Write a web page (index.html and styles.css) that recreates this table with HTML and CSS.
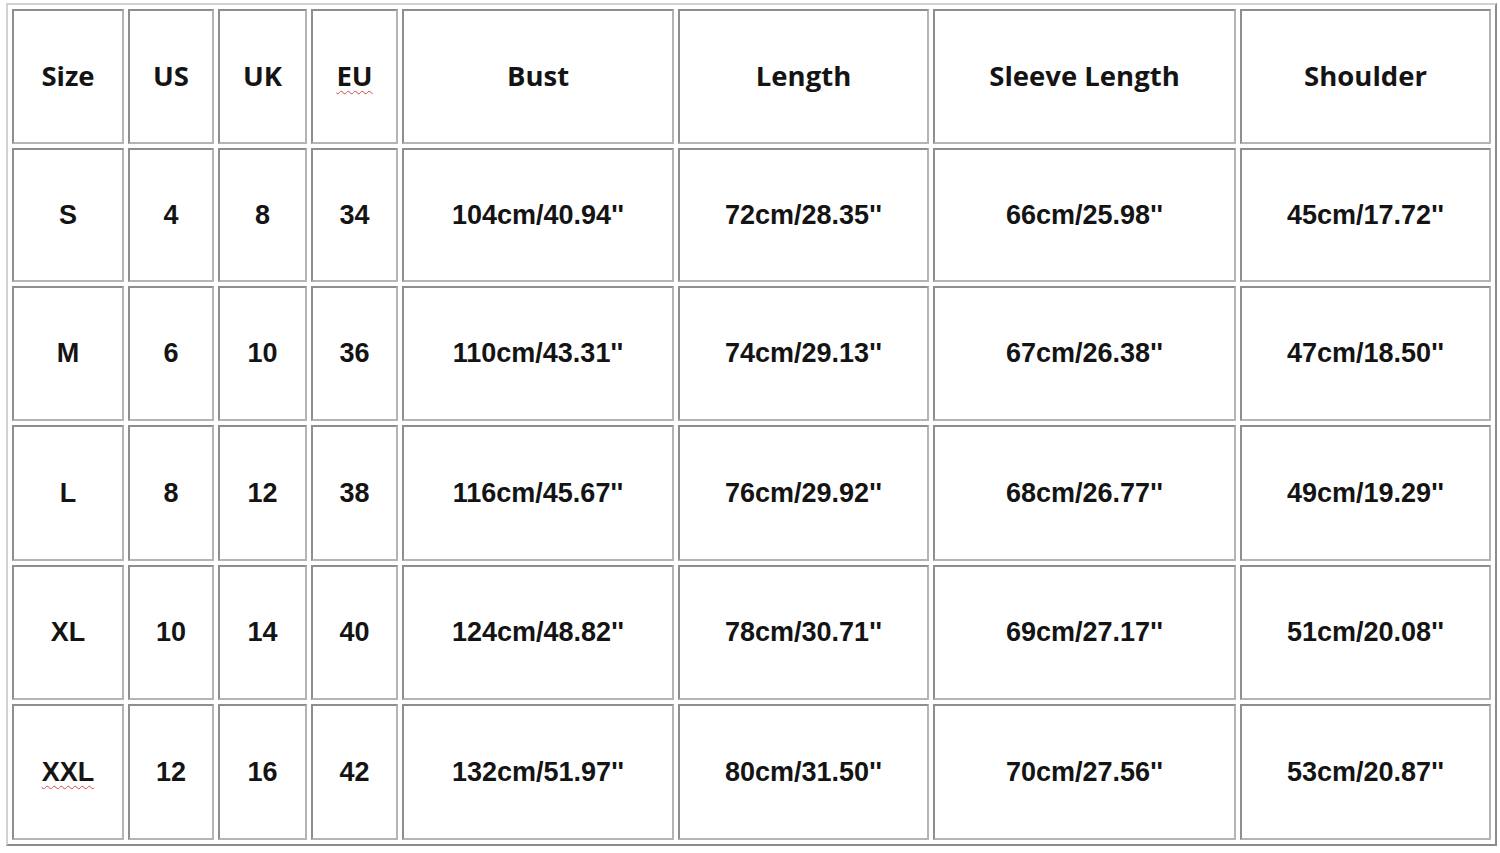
FILE: index.html
```html
<!DOCTYPE html>
<html>
<head>
<meta charset="utf-8">
<link rel="stylesheet" href="styles.css">
</head>
<body>
<div class="chart">
  <div class="cell head">Size</div><div class="cell head">US</div><div class="cell head">UK</div><div class="cell head"><span class="spell">EU</span></div><div class="cell head">Bust</div><div class="cell head">Length</div><div class="cell head">Sleeve Length</div><div class="cell head">Shoulder</div>
  <div class="cell">S</div><div class="cell">4</div><div class="cell">8</div><div class="cell">34</div><div class="cell">104cm/40.94''</div><div class="cell">72cm/28.35''</div><div class="cell">66cm/25.98''</div><div class="cell">45cm/17.72''</div>
  <div class="cell">M</div><div class="cell">6</div><div class="cell">10</div><div class="cell">36</div><div class="cell">110cm/43.31''</div><div class="cell">74cm/29.13''</div><div class="cell">67cm/26.38''</div><div class="cell">47cm/18.50''</div>
  <div class="cell">L</div><div class="cell">8</div><div class="cell">12</div><div class="cell">38</div><div class="cell">116cm/45.67''</div><div class="cell">76cm/29.92''</div><div class="cell">68cm/26.77''</div><div class="cell">49cm/19.29''</div>
  <div class="cell">XL</div><div class="cell">10</div><div class="cell">14</div><div class="cell">40</div><div class="cell">124cm/48.82''</div><div class="cell">78cm/30.71''</div><div class="cell">69cm/27.17''</div><div class="cell">51cm/20.08''</div>
  <div class="cell"><span class="spell">XXL</span></div><div class="cell">12</div><div class="cell">16</div><div class="cell">42</div><div class="cell">132cm/51.97''</div><div class="cell">80cm/31.50''</div><div class="cell">70cm/27.56''</div><div class="cell">53cm/20.87''</div>
</div>
</body>
</html>
```
FILE: styles.css
```css
html, body {
  margin: 0;
  padding: 0;
  background: #ffffff;
}
body {
  padding: 3px 0 0 6px;
  font-family: "Liberation Sans", Arial, sans-serif;
}
.chart {
  display: grid;
  grid-template-columns: 112px 86px 89px 87px 272px 251px 303px 251px;
  grid-template-rows: 135px 134px 135px 136px 135px 136px;
  gap: 4px;
  padding: 4px;
  width: max-content;
  border: 2px solid;
  border-color: #d2d2d2 #8c8c8c #8c8c8c #d2d2d2;
}
.cell {
  box-sizing: border-box;
  border: 2px solid;
  border-color: #8e8e8e #b4b4b4 #b4b4b4 #8e8e8e;
  display: flex;
  align-items: center;
  justify-content: center;
  font-weight: bold;
  font-size: 27px;
  color: #141414;
}
.head {
  font-family: "Open Sans", "DejaVu Sans", sans-serif;
  font-size: 27.5px;
  padding-bottom: 2px;
}
.spell {
  text-decoration: underline wavy #d04a4a;
  text-decoration-thickness: 1px;
  text-underline-offset: 4px;
}
```
